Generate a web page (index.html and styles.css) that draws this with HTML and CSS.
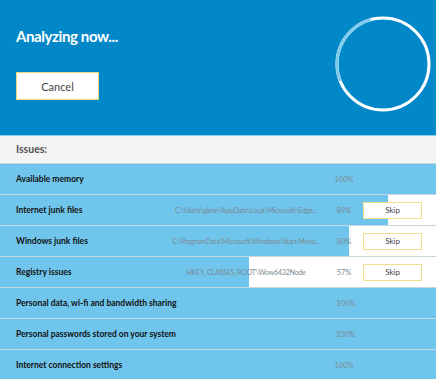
FILE: index.html
```html
<!DOCTYPE html>
<html lang="en">
<head>
    <meta charset="UTF-8">
    <meta name="viewport" content="width=device-width, initial-scale=1.0">
    <title>Analyzing</title>
    <link rel="stylesheet" href="styles.css">
</head>
<body>
    <div class="header">
        <div class="header-left">
            <h1 class="title">Analyzing now...</h1>
            <button class="cancel">Cancel</button>
        </div>
        <svg class="spinner" width="100" height="100" viewBox="0 0 100 100">
            <circle cx="50" cy="50" r="46" fill="none" stroke="#ffffff" stroke-width="3"/>
            <circle cx="50" cy="50" r="46" fill="none" stroke="#7fcbef" stroke-width="3"
                    stroke-dasharray="77.1 300" stroke-dashoffset="-126.9"/>
        </svg>
    </div>

    <div class="issues-head">Issues:</div>

    <div class="row" style="--p:100%">
        <span class="label">Available memory</span>
        <span class="path"></span>
        <span class="pct">100%</span>
        <span class="slot"></span>
    </div>
    <div class="row" style="--p:89%">
        <span class="label">Internet junk files</span>
        <span class="path">C:\Users\glenn\AppData\Local\Microsoft\Edge...</span>
        <span class="pct">89%</span>
        <span class="slot"><button class="skip">Skip</button></span>
    </div>
    <div class="row" style="--p:80%">
        <span class="label">Windows junk files</span>
        <span class="path">C:\ProgramData\Microsoft\Windows\Start Menu...</span>
        <span class="pct">80%</span>
        <span class="slot"><button class="skip">Skip</button></span>
    </div>
    <div class="row" style="--p:57%">
        <span class="label">Registry issues</span>
        <span class="path">HKEY_CLASSES_ROOT\Wow6432Node</span>
        <span class="pct">57%</span>
        <span class="slot"><button class="skip">Skip</button></span>
    </div>
    <div class="row" style="--p:100%">
        <span class="label">Personal data, wi-fi and bandwidth sharing</span>
        <span class="path"></span>
        <span class="pct">100%</span>
        <span class="slot"></span>
    </div>
    <div class="row" style="--p:100%">
        <span class="label">Personal passwords stored on your system</span>
        <span class="path"></span>
        <span class="pct">100%</span>
        <span class="slot"></span>
    </div>
    <div class="row" style="--p:100%">
        <span class="label">Internet connection settings</span>
        <span class="path"></span>
        <span class="pct">100%</span>
        <span class="slot"></span>
    </div>
</body>
</html>
```

FILE: styles.css
```css
body {
    font-family: Lato, "Open Sans", Arial, sans-serif;
    margin: 0;
    padding: 0;
    background-color: #fff;
    overflow: hidden;
}
.header {
    display: flex;
    justify-content: space-between;
    align-items: flex-start;
    height: 135px;
    padding: 0 3.5px 0 16px;
    background-color: #0288c9;
    border-bottom: 1px solid #8ccbec;
}
.header-left {
    display: flex;
    flex-direction: column;
    align-items: flex-start;
}
.title {
    margin: 26px 0 0 0;
    font-size: 15px;
    font-weight: bold;
    line-height: 20px;
    letter-spacing: -0.4px;
    color: #fff;
}
.cancel {
    margin-top: 26px;
    width: 83px;
    height: 28px;
    padding: 0;
    font-family: inherit;
    font-size: 11px;
    color: #444;
    background-color: #fff;
    border: 1px solid #ecd67c;
}
.spinner {
    margin-top: 13.5px;
}
.issues-head {
    height: 27px;
    line-height: 27px;
    padding-left: 16px;
    font-size: 10.5px;
    font-weight: bold;
    color: #555;
    background-color: #f4f4f4;
}
.row {
    display: flex;
    align-items: center;
    height: 30px;
    padding: 0 14px 0 16px;
    border-top: 1px solid #c6d6de;
    background: linear-gradient(to right, #70c5ec var(--p), #fff var(--p));
}
.label {
    flex: 1;
    font-size: 8.5px;
    font-weight: bold;
    color: #111;
    white-space: nowrap;
}
.path {
    width: 150px;
    margin-right: 8px;
    text-align: center;
    font-size: 7px;
    letter-spacing: -0.2px;
    color: #7a8a92;
    white-space: nowrap;
}
.pct {
    width: 30px;
    text-align: center;
    font-size: 7.5px;
    color: #7a8a92;
}
.slot {
    width: 59px;
    margin-left: 4px;
}
.skip {
    display: block;
    width: 59px;
    height: 17px;
    padding: 0;
    font-family: inherit;
    font-size: 8px;
    color: #444;
    background-color: #fff;
    border: 1px solid #f2de8c;
}
```
